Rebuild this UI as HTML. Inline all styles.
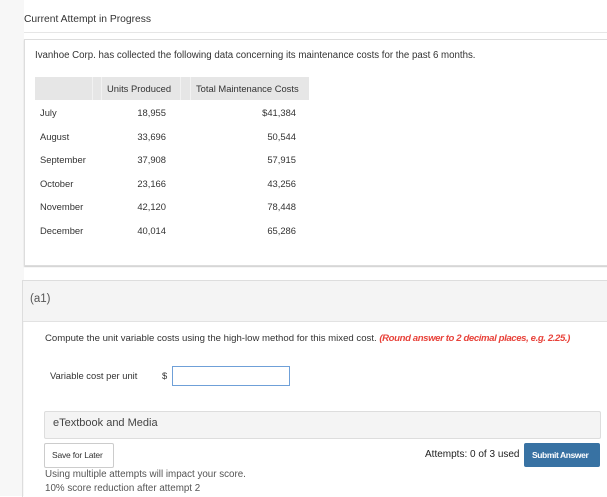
<!DOCTYPE html>
<html><head><style>
body{margin:0;width:607px;height:496px;background:#fff;font-family:"Liberation Sans",sans-serif;color:#333;position:relative;overflow:hidden}
.a{position:absolute;white-space:nowrap}
.s{font-size:9.4px;letter-spacing:0}
</style></head><body>
<div class="a" style="left:0;top:0;width:24px;height:496px;background:#f7f7f7"></div>
<div class="a" style="left:24px;top:14px;font-size:10.3px;color:#333">Current Attempt in Progress</div>
<div class="a" style="left:24px;top:32px;width:583px;height:1px;background:#e6e6e6"></div>
<div class="a" style="left:24px;top:39px;width:590px;height:225px;border:1px solid #ddd;box-shadow:0 1px 1px #ccc"></div>
<div class="a s" style="left:35px;top:50px;color:#333;font-size:9.7px">Ivanhoe Corp. has collected the following data concerning its maintenance costs for the past 6 months.</div>
<div class="a" style="left:35px;top:77px;width:274px;height:23px;background:#e6e6e6"></div>
<div class="a" style="left:92px;top:77px;width:1px;height:23px;background:#f2f2f2"></div>
<div class="a" style="left:101px;top:77px;width:1px;height:23px;background:#f2f2f2"></div>
<div class="a" style="left:180px;top:77px;width:1px;height:23px;background:#f2f2f2"></div>
<div class="a" style="left:190px;top:77px;width:1px;height:23px;background:#f2f2f2"></div>
<div class="a s" style="left:107px;top:83px">Units Produced</div>
<div class="a s" style="left:196px;top:83px">Total Maintenance Costs</div>
<div class="s" style="position:absolute;left:40px;top:101px;line-height:23.6px">July<br>August<br>September<br>October<br>November<br>December</div>
<div class="s" style="position:absolute;left:110px;width:56px;text-align:right;top:101px;line-height:23.6px">18,955<br>33,696<br>37,908<br>23,166<br>42,120<br>40,014</div>
<div class="s" style="position:absolute;left:230px;width:66px;text-align:right;top:101px;line-height:23.6px">$41,384<br>50,544<br>57,915<br>43,256<br>78,448<br>65,286</div>
<div class="a" style="left:22px;top:280px;width:590px;height:216px;border:1px solid #ddd;border-bottom:none"></div>
<div class="a" style="left:23px;top:281px;width:590px;height:40px;background:#f4f4f4;border-bottom:1px solid #e2e2e2"></div>
<div class="a" style="left:30px;top:293px;font-size:11.5px;color:#555">(a1)</div>
<div class="a s" style="left:45px;top:333px;font-size:9.6px">Compute the unit variable costs using the high-low method for this mixed cost. <i style="color:#e8423a;font-weight:bold;letter-spacing:-0.4px">(Round answer to 2 decimal places, e.g. 2.25.)</i></div>
<div class="a s" style="left:50px;top:370px">Variable cost per unit</div>
<div class="a s" style="left:162px;top:370px">$</div>
<div class="a" style="left:172px;top:366px;width:116px;height:18px;border:1px solid #6fa0d8"></div>
<div class="a" style="left:44px;top:411px;width:555px;height:26px;background:#f4f4f4;border:1px solid #ddd;border-radius:2px"></div>
<div class="a" style="left:53px;top:417px;font-size:11px;color:#444">eTextbook and Media</div>
<div class="a" style="left:44px;top:443px;width:68px;height:23px;border:1px solid #ccc;border-radius:2px;background:#fff"></div>
<div class="a" style="left:52px;top:450px;font-size:8.5px;letter-spacing:-0.2px">Save for Later</div>
<div class="a" style="left:425px;top:449px;font-size:10px;color:#222">Attempts: 0 of 3 used</div>
<div class="a" style="left:524px;top:443px;width:76px;height:24px;background:#3872a3;border-radius:2px"></div>
<div class="a" style="left:532px;top:450px;font-size:8.5px;color:#fff;font-weight:bold;letter-spacing:-0.4px">Submit Answer</div>
<div class="a s" style="left:45px;top:469px;color:#555;font-size:9.8px">Using multiple attempts will impact your score.</div>
<div class="a s" style="left:45px;top:483px;color:#555;font-size:9.8px">10% score reduction after attempt 2</div>
</body></html>
